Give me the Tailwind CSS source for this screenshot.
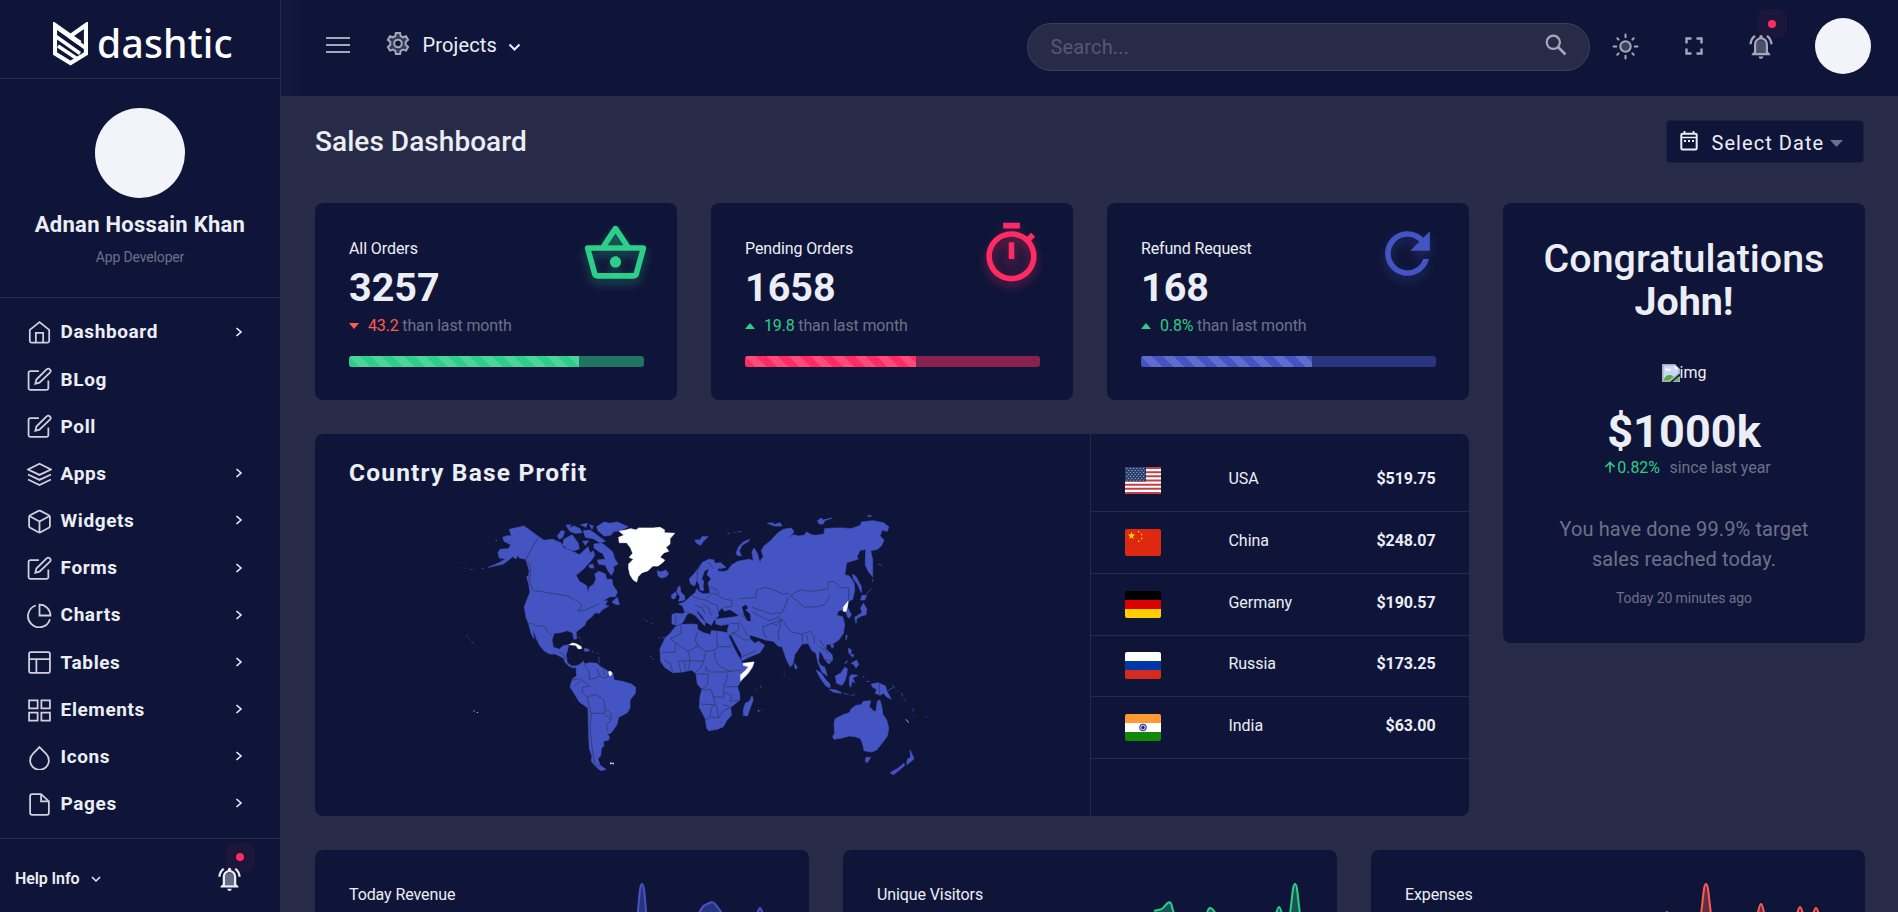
<!DOCTYPE html>
<html lang="en">
<head>
<meta charset="utf-8">
<title>Dashtic - Sales Dashboard</title>
<script src="https://cdn.jsdelivr.net/npm/@tailwindcss/browser@4"></script>
</head>
<body class="h-[912px] overflow-hidden bg-[#272b48] text-[#eceef6] text-base font-['Roboto',sans-serif]">
<svg class="hidden">
  <symbol id="home" viewBox="0 0 24 24"><path d="M2.700 9.500 12 2l9.300 7.500V20a1.800 1.800 0 0 1-1.800 1.800h-15A1.800 1.800 0 0 1 2.700 20z"/><path d="M8.500 21.800V12.300h7v9.500"/></symbol>
  <symbol id="edit" viewBox="0 0 24 24"><path d="M11.500 4H3.300A1.800 1.800 0 0 0 1.500 5.800v14.400A1.800 1.800 0 0 0 3.300 22h15.400a1.800 1.800 0 0 0 1.800-1.800V13"/><path d="M18.800 2.400a2.200 2.200 0 0 1 3.200 3.100L12 15l-4 1 1-4z"/></symbol>
  <symbol id="layers" viewBox="0 0 24 24"><path d="m12 1.700 11 5.500-11 5.200L1 7.200zM1 12l11 5.200L23 12M1 16.800 12 22.200l11-5.400"/></symbol>
  <symbol id="box" viewBox="0 0 24 24"><path d="M22 16.500v-9a2 2 0 0 0-1-1.500l-8-4.200a2 2 0 0 0-2 0L3 6a2 2 0 0 0-1 1.500v9A2 2 0 0 0 3 18l8 4.300a2 2 0 0 0 2 0l8-4.300a2 2 0 0 0 1-1.500z"/><path d="M2.300 6.700 12 12.010l9.700-5.310M12 22.500V12"/></symbol>
  <symbol id="pie" viewBox="0 0 24 24"><path d="M22 15.500A10.700 10.700 0 1 1 8.500 2.400"/><path d="M22.500 12A10.500 10.500 0 0 0 12 1.500V12z"/></symbol>
  <symbol id="table" viewBox="0 0 24 24"><rect x="2" y="2" width="20" height="20" rx="1.800"/><path d="M2 8.700h20M9 22V8.700"/></symbol>
  <symbol id="grid" viewBox="0 0 24 24"><path d="M2 2.200h8.200v7.800H2zM13.800 2.200H22v7.800h-8.200zM13.800 14H22v7.800h-8.200zM2 14h8.200v7.800H2z"/></symbol>
  <symbol id="drop" viewBox="0 0 24 24"><path d="m12 2 6.400 6.500a9 9 0 1 1-12.800 0z"/></symbol>
  <symbol id="file" viewBox="0 0 24 24"><path d="M13.500 2H5a2 2 0 0 0-2 2v16a2 2 0 0 0 2 2h14a2 2 0 0 0 2-2V9z"/><path d="M13.500 2v7H21"/></symbol>
  <symbol id="right" viewBox="0 0 10 12"><path d="m2.500 2 4.500 4-4.500 4"/></symbol>
  <symbol id="bell" viewBox="0 0 24 24"><path d="M8 18v-7a4 4 0 0 1 8 0v7z" fill="currentColor" opacity=".4"/><path d="M18 17v-6c0-3.070-1.630-5.640-4.500-6.320V4a1.500 1.500 0 0 0-3 0v.680C7.640 5.360 6 7.920 6 11v6l-2 2v1h16v-1zm-2 1H8v-7c0-2.480 1.510-4.500 4-4.500s4 2.020 4 4.500zM12 23a2 2 0 0 0 2-2h-4c0 1.100.9 2 2 2zM7.580 4.080 6.150 2.650C3.750 4.480 2.170 7.300 2.030 10.500h2a8.450 8.450 0 0 1 3.550-6.420zM19.970 10.500h2c-.15-3.200-1.730-6.020-4.120-7.850l-1.420 1.430a8.500 8.500 0 0 1 3.540 6.420z" fill="currentColor"/></symbol>
</svg>
<div class="flex h-full">

<aside class="flex h-[912px] w-[281px] shrink-0 flex-col border-r border-[#272b48] bg-[#0f1538]">
  <div class="flex h-[79px] items-center border-b border-[#272b48] pt-[10px] pl-[53px]">
    <svg class="h-[44px] w-[35px] text-white" viewBox="0 0 35 44" fill="none" stroke="currentColor" stroke-width="4.200"><path d="M2 3v28.500L17.500 41 33 31.500V3L17.500 14z"/><path d="M3 5 32.500 26M3 14.500 27 31.500M5 24l18 12" stroke-width="3.600"/><path d="M17.500 14.500 27 21" stroke-width="5"/></svg>
    <span class="mt-[-4px] ml-[9px] text-[39px] leading-none font-medium tracking-[0.200px] text-white font-['Noto_Sans',sans-serif]">dashtic</span>
  </div>
  <div class="flex h-[219px] flex-col items-center border-b border-[#272b48] pt-[29px]">
    <div class="size-[90px] rounded-full bg-[#f3f4f9]"></div>
    <div class="mt-[12px] text-[22px] leading-[30px] font-bold tracking-[0.280px]">Adnan Hossain Khan</div>
    <div class="mt-[7px] text-[14px] leading-[20px] tracking-[-0.150px] text-[#6c7189]">App Developer</div>
  </div>
  <nav class="flex h-[541px] flex-col border-b border-[#272b48] pt-[11px] text-[19px] font-bold tracking-[0.600px] [&>a]:flex [&>a]:h-[47.200px] [&>a]:items-center [&>a]:pl-[27px] [&>a>svg:first-child]:mr-[8.600px] [&>a>svg:first-child]:size-[25px] [&>a>svg:first-child]:fill-none [&>a>svg:first-child]:stroke-[#cfd1dc] [&>a>svg:first-child]:stroke-[1.700] [&>a>svg+span+svg]:mt-[-2px] [&>a>svg+span+svg]:mr-[36px] [&>a>svg+span+svg]:ml-auto [&>a>svg+span+svg]:h-[12px] [&>a>svg+span+svg]:w-[10px] [&>a>svg+span+svg]:fill-none [&>a>svg+span+svg]:stroke-[#eceef6] [&>a>svg+span+svg]:stroke-[1.600]">
    <a><svg><use href="#home"/></svg><span>Dashboard</span><svg><use href="#right"/></svg></a>
    <a><svg><use href="#edit"/></svg><span>BLog</span></a>
    <a><svg><use href="#edit"/></svg><span>Poll</span></a>
    <a><svg><use href="#layers"/></svg><span>Apps</span><svg><use href="#right"/></svg></a>
    <a><svg><use href="#box"/></svg><span>Widgets</span><svg><use href="#right"/></svg></a>
    <a><svg><use href="#edit"/></svg><span>Forms</span><svg><use href="#right"/></svg></a>
    <a><svg><use href="#pie"/></svg><span>Charts</span><svg><use href="#right"/></svg></a>
    <a><svg><use href="#table"/></svg><span>Tables</span><svg><use href="#right"/></svg></a>
    <a><svg><use href="#grid"/></svg><span>Elements</span><svg><use href="#right"/></svg></a>
    <a><svg><use href="#drop"/></svg><span>Icons</span><svg><use href="#right"/></svg></a>
    <a><svg><use href="#file"/></svg><span>Pages</span><svg><use href="#right"/></svg></a>
  </nav>
  <div class="flex flex-1 items-center pt-[6px] pr-[37.500px] pl-[15px]">
    <span class="text-[16px] font-semibold tracking-[-0.100px]">Help Info</span>
    <svg class="ml-[11px] h-[8px] w-[12px]" viewBox="0 0 12 8" fill="none" stroke="currentColor" stroke-width="1.500"><path d="m2 2 4 4 4-4"/></svg>
    <div class="relative mt-[-1px] ml-auto">
      <svg class="block size-[27px]"><use href="#bell"/></svg>
      <span class="absolute -top-[22px] left-[10px] flex size-[29px] items-center justify-center rounded-[9px] bg-[#ff2b63]/5"><i class="size-[8px] rounded-full bg-[#ff2b63]"></i></span>
    </div>
  </div>
</aside>

<div class="flex min-w-0 flex-1 flex-col">
  <header class="flex h-[96px] shrink-0 items-center bg-[#0f1538] bg-linear-to-r from-[#131840] from-0% to-[#0f1538] to-[2%] pr-[27px] pl-[45px]">
    <svg class="mt-[-7px] h-[20px] w-[24px] text-[#a5a8b8]" viewBox="0 0 24 20" stroke="currentColor" stroke-width="2"><path d="M0 3h24M0 10h24M0 17h24"/></svg>
    <svg class="mt-[-9px] ml-[36px] h-[25px] w-[24px] text-[#a5a8b8]" viewBox="0 0 24 24" fill="none" stroke="currentColor" stroke-width="2"><path d="M9.900 1.500h4.200l.6 3 2.300 1.300 3-1.100 2.100 3.600-2.400 2.100v2.900l2.400 2.100-2.100 3.700-3-1.100-2.300 1.300-.6 3.200H9.900l-.6-3.200L7 18l-3 1.100-2.100-3.700 2.400-2.100v-2.900L1.900 8.300 4 4.700l3 1.100 2.300-1.300z" fill="#a5a8b8" fill-opacity=".25"/><circle cx="12" cy="12" r="3.800" fill="#0f1538"/></svg>
    <span class="mt-[-6px] ml-[12.500px] text-[20px] tracking-[0.150px]">Projects</span>
    <svg class="mt-[-2px] ml-[11px] h-[9px] w-[13px]" viewBox="0 0 13 9" fill="none" stroke="currentColor" stroke-width="2"><path d="m1.500 1.500 5 5 5-5"/></svg>
    <div class="mt-[-2px] ml-auto flex h-[48px] w-[563px] items-center rounded-full border border-[#3a3f5c] bg-[#272b48] pr-[22px] pl-[22.500px]">
      <span class="text-[20px] tracking-[0.150px] text-[#555972]">Search...</span>
      <svg class="mt-[-5px] ml-auto size-[22px] text-[#a5a8b8]" viewBox="0 0 22 22" fill="none" stroke="currentColor" stroke-width="2.200"><circle cx="8.300" cy="8.300" r="6.600"/><path d="m13 13 7.500 7.500" stroke-width="2.600"/></svg>
    </div>
    <svg class="mt-[-3px] ml-[22px] size-[27px] text-[#a5a8b8]" viewBox="0 0 27 27" fill="none" stroke="currentColor" stroke-width="2"><circle cx="13.500" cy="13.500" r="5.200" fill="#a5a8b8" fill-opacity=".3"/><path stroke-linecap="round" d="M13.500 1.500v2.800M13.500 22.700v2.800M1.500 13.500h2.800M22.700 13.500h2.800M5.300 5.300l1.300 1.300M20.400 20.400l1.300 1.300M21.700 5.300l-1.300 1.300M6.600 20.400l-1.300 1.300"/></svg>
    <svg class="mt-[-5px] ml-[46px] size-[18px] text-[#a5a8b8]" viewBox="0 0 18 18" fill="none" stroke="currentColor" stroke-width="2.400"><path d="M1.500 6.500V1.500h5M11.500 1.500h5v5M16.500 11.500v5h-5M6.500 16.500h-5v-5"/></svg>
    <div class="relative mt-[-4px] ml-[44px]">
      <svg class="block size-[28px] text-[#a5a8b8]"><use href="#bell"/></svg>
      <span class="absolute -top-[23px] left-[10.500px] flex size-[29px] items-center justify-center rounded-[9px] bg-[#ff2b63]/5"><i class="size-[8px] rounded-full bg-[#ff2b63]"></i></span>
    </div>
    <div class="mt-[-4px] ml-[40px] size-[56px] rounded-full bg-[#f3f4f9]"></div>
  </header>

  <main class="flex flex-1 flex-col px-[34px] pr-[33px]">
    <div class="flex h-[107px] items-start justify-between pt-[24px]">
      <h1 class="mt-[2px] text-[28px] leading-[40px] font-medium tracking-[0.050px]">Sales Dashboard</h1>
      <div class="mr-[1px] flex h-[43px] w-[198px] items-center rounded-[4px] border border-[#1b2045] bg-[#0f1538] pl-[13px]">
        <svg class="mt-[-1px] h-[20px] w-[18px]" viewBox="0 0 18 20" fill="none" stroke="currentColor" stroke-width="2"><path d="M4.500 0v3M13.500 0v3" stroke-width="1.800"/><rect x="1.300" y="2.700" width="15.400" height="15.800" rx="1.200"/><path d="M1 6.500h16" stroke-width="1.500"/><path d="M4 10h2m2 0h2m2 0h2"/></svg>
        <span class="mt-[3px] ml-[13.500px] text-[20px] tracking-[1.050px]">Select Date</span>
        <svg class="mt-[3px] ml-[6px] h-[7px] w-[13px] text-[#6c7189]" viewBox="0 0 13 7" fill="currentColor"><path d="M0 0h13L6.500 7z"/></svg>
      </div>
    </div>

    <div class="flex gap-[34px]">
      <div class="flex w-[1154px] flex-col gap-[33.500px]">
        <div class="grid grid-cols-3 gap-[34px]">
          <section class="relative h-[197px] rounded-[8px] bg-[#0f1538] pt-[34px] pr-[33px] pl-[34px]">
            <div class="text-[16px] leading-[24px] tracking-[-0.080px]">All Orders</div>
            <div class="text-[39.500px] leading-[53px] font-bold">3257</div>
            <div class="flex items-center text-[16px] leading-[24px] tracking-[-0.160px] text-[#6c7189]"><svg class="mr-[9px] h-[6px] w-[10px]" viewBox="0 0 10 6"><path d="M0 0h10L5 6z" fill="#ff5b51"/></svg><span><span class="text-[#ff5b51]">43.2</span> than last month</span></div>
            <div class="mt-[17.500px] h-[11px] overflow-hidden rounded-[3px] bg-[#207561]"><div class="h-full bg-[#2dce89] bg-[linear-gradient(45deg,rgba(255,255,255,.15)_25%,transparent_25%,transparent_50%,rgba(255,255,255,.15)_50%,rgba(255,255,255,.15)_75%,transparent_75%)] bg-[length:22px_22px]" style="width:78%"></div></div>
            <svg class="absolute top-[17px] right-[28px] size-[67px] drop-shadow-[0_5px_5px_rgba(45,206,137,.35)]" viewBox="0 0 24 24" fill="#2dce89"><path d="M9 9l3-4.600L15 9z" opacity=".15"/><path d="M22 9h-4.790l-4.380-6.560c-.19-.28-.51-.42-.83-.42s-.64.140-.83.430L6.790 9H2c-.55 0-1 .45-1 1 0 .09.010.18.040.270l2.540 9.270c.23.840 1 1.460 1.920 1.460h13c.92 0 1.690-.62 1.930-1.460l2.540-9.270L23 10c0-.55-.45-1-1-1zM12 4.800 14.800 9H9.200zM18.500 19l-12.990.010L3.310 11H20.700zM12 13c-1.100 0-2 .9-2 2s.9 2 2 2 2-.9 2-2-.9-2-2-2z"/></svg>
          </section>
          <section class="relative h-[197px] rounded-[8px] bg-[#0f1538] pt-[34px] pr-[33px] pl-[34px]">
            <div class="text-[16px] leading-[24px] tracking-[-0.100px]">Pending Orders</div>
            <div class="text-[39.500px] leading-[53px] font-bold">1658</div>
            <div class="flex items-center text-[16px] leading-[24px] tracking-[-0.160px] text-[#6c7189]"><svg class="mr-[9px] h-[6px] w-[10px]" viewBox="0 0 10 6"><path d="M0 6h10L5 0z" fill="#2dce89"/></svg><span><span class="text-[#2dce89]">19.8</span> than last month</span></div>
            <div class="mt-[17.500px] h-[11px] overflow-hidden rounded-[3px] bg-[#87224e]"><div class="h-full bg-[#ff2b63] bg-[linear-gradient(45deg,rgba(255,255,255,.15)_25%,transparent_25%,transparent_50%,rgba(255,255,255,.15)_50%,rgba(255,255,255,.15)_75%,transparent_75%)] bg-[length:22px_22px]" style="width:58%"></div></div>
            <svg class="absolute top-[17px] right-[28px] size-[67px] drop-shadow-[0_5px_5px_rgba(255,43,99,.35)]" viewBox="0 0 24 24" fill="#ff2b63"><circle cx="12" cy="13.500" r="8" opacity=".07"/><path d="M15 1H9v2h6V1zm-4 13h2V8h-2v6zm8.030-6.610 1.420-1.420c-.43-.51-.9-.99-1.410-1.410l-1.420 1.420A8.962 8.962 0 0 0 12 4c-4.970 0-9 4.030-9 9s4.020 9 9 9a8.994 8.994 0 0 0 7.030-14.610zM12 20c-3.870 0-7-3.130-7-7s3.130-7 7-7 7 3.130 7 7-3.130 7-7 7z"/></svg>
          </section>
          <section class="relative h-[197px] rounded-[8px] bg-[#0f1538] pt-[34px] pr-[33px] pl-[34px]">
            <div class="text-[16px] leading-[24px] tracking-[-0.160px]">Refund Request</div>
            <div class="text-[39.500px] leading-[53px] font-bold">168</div>
            <div class="flex items-center text-[16px] leading-[24px] tracking-[-0.160px] text-[#6c7189]"><svg class="mr-[9px] h-[6px] w-[10px]" viewBox="0 0 10 6"><path d="M0 6h10L5 0z" fill="#2dce89"/></svg><span><span class="text-[#2dce89]">0.8%</span> than last month</span></div>
            <div class="mt-[17.500px] h-[11px] overflow-hidden rounded-[3px] bg-[#29357e]"><div class="h-full bg-[#4454c3] bg-[linear-gradient(45deg,rgba(255,255,255,.15)_25%,transparent_25%,transparent_50%,rgba(255,255,255,.15)_50%,rgba(255,255,255,.15)_75%,transparent_75%)] bg-[length:22px_22px]" style="width:58%"></div></div>
            <svg class="absolute top-[17px] right-[28px] size-[67px] drop-shadow-[0_5px_5px_rgba(68,84,195,.35)]" viewBox="0 0 24 24" fill="#4454c3"><path d="M17.650 6.350A7.958 7.958 0 0 0 12 4c-4.420 0-7.990 3.580-7.990 8s3.570 8 7.990 8c3.730 0 6.840-2.550 7.730-6h-2.080A5.990 5.990 0 0 1 12 18c-3.310 0-6-2.690-6-6s2.690-6 6-6c1.660 0 3.140.69 4.220 1.780L13 11h7V4l-2.350 2.350z"/></svg>
          </section>
        </div>

        <section class="flex h-[382px] overflow-hidden rounded-[8px] bg-[#0f1538]">
          <div class="w-[775px] px-[34px] pt-[23px]">
            <h2 class="text-[24.500px] leading-[32px] font-bold tracking-[1.200px]">Country Base Profit</h2>
            <svg class="mt-[11px] ml-[101px] h-[280px] w-[480px]" viewBox="0 0 1440 840" fill="#4454c3">
              <g stroke="#4454c3" stroke-width="2" stroke-linejoin="round">
                <path d="M178 88 222 78 266 110 228 178 208 174 204 164 198 176 188 170 176 180 160 192 115 202 150 187 167 176 148 174 144 158 150 148 176 146 182 134 162 124 158 112 172 107 184 108z"/>
                <path d="M266 110 282 121 308 118 332 128 342 145 372 156 388 164 404 150 414 140 420 160 430 152 434 166 422 184 412 194 400 208 378 226 388 244 410 257 414 281 418 262 432 252 438 236 434 222 446 214 466 222 470 238 486 238 488 254 502 276 496 290 480 290 458 303 472 302 466 316 476 318 456 330 448 340 436 338 424 352 410 362 404 376 386 390 378 396 380 416 372 418 368 398 352 392 330 398 312 400 306 420 310 442 328 448 338 438 356 434 352 452 348 464 352 488 364 498 378 498 374 504 360 500 346 488 340 474 316 462 300 462 284 454 270 438 260 418 248 384 252 416 244 402 236 372 228 352 223 320 240 276 238 262 234 240 238 212 228 180z"/>
                <path d="M342 118 366 104 384 128 388 146 374 152 350 146 338 134zM322 108 334 92 344 94 338 112 328 118zM348 76 362 74 358 84 372 78 390 86 396 98 376 100 360 94zM392 74 412 70 408 82zM400 92 420 90 440 104 466 124 450 128 430 116 406 112zM418 74 430 78 426 88zM440 80 462 66 480 70 502 66 534 80 512 92 492 94 482 106 462 108 444 92zM398 124 416 122 406 136zM432 132 456 130 472 142 488 156 494 176 504 192 490 200 492 212 484 226 474 212 466 196 446 192 442 180 466 178 458 160 448 156 432 144zM416 196 428 192 432 204 420 204zM486 306 502 292 508 314 494 312zM236 182 242 192 244 218 236 206zM230 230 234 228 234 244zM238 260 250 268 248 274z"/>
                <path d="M136 118 142 124M34 188l3 2M46 203l4 2M60 208l5 1M70 209l4 0M95 206l8-2M48 406l4 3M56 413l4 3M64 424l6 6M386 410l4 6M392 424l4 4M402 446 412 446 420 452 404 454zM426 454l5 2M440 460l5 1M446 470l2 20M580 360l4 0M590 362l4 4M603 369l3 2M626 412l4 1M638 414l4 0M600 468l6 2M606 478l4-2"/>
                <path d="M400 484 404 492 420 488 440 490 452 500 472 512 488 518 492 540 516 544 544 552 557 562 556 580 540 600 540 624 532 638 506 652 500 676 484 698 470 704 478 708 476 720 460 724 462 738 454 744 452 768 444 776 450 796 468 808 452 812 434 796 424 784 426 768 418 746 416 700 414 624 388 606 370 576 360 560 368 536 380 528 378 498 388 494z"/>
                <path d="M622 212 632 216 648 210 656 222 648 230 634 234 624 228zM666 296 664 286 676 276 680 284 674 296zM684 262 690 258 692 276 704 288 704 300 686 304 690 290 680 276z"/>
              </g>
              <g fill="#fff" stroke="#fff" stroke-width="2"><path d="M508 94 528 90 542 86 558 90 566 84 590 84 610 84 630 82 644 90 642 98 674 100 660 116 660 132 648 142 656 154 642 158 630 172 644 180 640 186 624 198 608 198 594 212 576 218 564 230 560 246 550 240 540 224 536 206 536 192 550 178 538 172 548 160 542 144 530 128 508 128 506 112 522 106z"/><path d="M358 434 368 429 380 432 394 440 394 446 384 446 378 436zM474 516 482 514 486 522 480 528zM70 632l4 2M80 637l4 1M480 788l5 1-3 4M487 789l5 1-4 3"/></g>
              <g transform="translate(600)" stroke="#4454c3" stroke-width="2" stroke-linejoin="round">
                <path d="M66 344 76 340 100 342 104 334 98 318 86 312 104 306 114 296 126 286 136 278 140 266 148 276 160 282 180 280 178 264 174 248 164 246 160 272 150 270 148 254 140 240 134 258 122 252 118 236 132 222 144 206 156 188 176 178 192 180 194 190 212 188 228 202 208 206 212 216 232 212 246 194 264 184 284 180 298 178 310 182 306 156 312 144 322 160 330 190 334 176 340 172 334 152 342 138 362 122 382 100 400 88 424 84 432 96 414 116 430 104 446 108 462 106 470 96 484 104 498 106 522 102 524 86 556 84 580 84 604 86 632 76 634 66 668 62 700 68 716 80 712 94 696 90 690 108 702 120 694 138 682 148 662 152 668 180 668 230 656 216 646 196 646 168 648 146 638 152 640 170 622 178 590 188 584 224 598 228 612 248 614 270 608 298 596 304 592 322 604 344 596 354 586 334 576 330 566 332 560 346 578 350 584 374 580 400 566 420 544 434 530 432 528 446 546 464 548 480 536 492 524 478 516 462 508 452 506 484 512 496 524 502 532 528 516 516 504 488 498 460 486 452 474 430 456 432 434 464 428 494 420 500 410 480 396 440 384 438 370 424 346 420 336 416 316 410 298 404 300 416 314 430 326 424 344 436 330 458 300 470 276 482 270 464 252 436 236 408 232 390 238 372 212 376 198 372 196 358 226 354 258 350 268 346 236 330 228 336 210 334 204 350 192 360 184 376 168 366 158 350 146 336 136 330 152 352 166 366 164 378 150 362 136 346 120 338 110 344 98 368 82 376 66 372z"/>
                <path d="M76 380 92 374 124 372 142 374 142 388 160 398 182 404 184 392 206 394 232 398 236 412 250 440 266 468 276 488 290 492 312 486 308 502 296 520 274 542 262 560 268 578 270 600 242 622 244 646 230 662 220 680 202 688 176 692 170 684 166 656 148 622 150 590 156 568 142 552 138 520 124 510 98 516 68 518 44 502 32 484 30 446 46 414 62 398z"/>
                <path d="M306 588 310 598 302 620 292 648 280 646 280 630 286 610 298 604zM434 490 442 502 438 508 434 502zM258 160 266 140 280 126 298 118 296 124 276 136 268 152 274 168 262 166zM134 120 150 120 156 110 174 110 160 124 152 136 140 130zM352 70 368 68 372 74 390 68 396 78 374 78zM502 62 514 54 520 60 546 54 524 62 520 72 508 72zM652 48l10-2 2 4zM232 100l8 0M250 98l6-1M262 96l14-2"/>
                <path d="M608 222 618 230 634 260 634 278 622 252 610 236zM636 286 650 286 644 300 632 300zM640 310 650 326 648 344 634 348 620 356 618 370 614 352 636 338 632 324zM650 282 664 266M668 236 668 246M684 192 696 196M588 406 592 406 588 420zM590 334 600 340 600 352 592 350zM544 434 552 436 548 444 542 440zM596 444 604 450 602 462 612 464 608 472 596 458zM604 490 620 480 626 494 618 504 612 494zM584 490 592 482 590 488z"/>
                <path d="M498 510 512 518 528 540 540 552 540 564 528 558 512 536zM538 568 558 570 574 578 572 580 550 576zM556 528 572 520 584 502 592 506 590 524 584 544 576 556 560 550zM598 532 604 524 624 526 608 534 614 548 606 544 602 562 598 552zM580 580 596 584M602 588 616 582M648 544l12 0M640 528l2 6M664 552 676 550 684 548 706 558 712 576 724 598 712 592 700 580 690 586 676 580 680 568 668 562zM714 572 730 562M726 556 736 564M742 572l4 4M754 578 758 590M762 598l6 6M788 626l2 8M793 648l2 3M828 648l2 4M318 570l4-2M332 562l2-5M330 558l3 4M334 630l4 0M402 514l0 4M402 524l2 4M4 370l3 2M40 412l6 2"/>
                <path d="M556 656 580 644 598 638 604 626 618 616 634 614 640 604 662 602 658 620 672 634 678 634 682 604 690 600 696 624 698 642 710 660 716 684 712 708 696 730 680 750 664 756 642 752 638 732 632 716 616 710 598 708 576 714 552 718 548 710 554 700 552 670zM648 772 662 772 652 788 646 784zM780 750 792 776 784 784 770 794 772 778 782 772zM762 790 764 796 746 812 730 824 720 818 742 806z"/>
              </g>
              <g transform="translate(600)" fill="#0f1538"><path d="M204 206 212 206 206 216zM164 214 176 206 170 224 182 236 176 246 170 250 166 268 160 262 162 244 156 236zM204 338 216 324 222 334 240 330 250 336 258 342 240 346 208 346zM276 320 288 314 294 324 286 330 300 342 302 364 292 362 282 344zM236 404 244 408 274 464 274 476 264 464zM622 170 630 152 640 150 644 172 628 180z"/></g>
              <g transform="translate(600)" fill="#fff" stroke="#fff" stroke-width="2"><path d="M594 304 592 320 588 334 580 334 580 322zM280 490 312 486 306 502 292 522 272 542 272 524 286 512 296 500 280 496zM324 632l4 1M768 658l8 10"/></g>
              <g fill="none" stroke="#303760" stroke-width="2.200">
                <path d="M266 110 226 180 238 192 242 218 238 240 248 270M250 271 354 288 382 304 396 316 384 334 410 328 438 316 448 310M236 370 250 372 258 378 284 378 292 394 306 408M326 456 340 462 346 480M402 492 412 506 418 520 418 538 438 534 450 528 440 506M450 528 460 534 474 530M460 510 464 526M474 510 474 530M368 540 390 536 406 548 418 558 398 562 396 578 412 590 440 584 462 600 466 626 482 640 484 660 470 672 472 694M372 558 390 544M412 590 418 620 424 640 462 640 466 626M424 640 420 680 426 740 434 790 450 800M462 640 482 660"/>
                <path transform="translate(600)" d="M270 296 294 294 318 292 320 270 344 262 372 270 398 282 414 280 424 290 432 278 454 270 482 274 532 268 536 246 552 244 572 262 596 264 596 300M424 290 444 304 464 322 500 320 524 314 540 286M414 292 410 306 402 326 394 340 376 338 364 342 342 334 306 322M308 336 330 350 360 362 386 350 390 362 366 370 338 380 342 402 350 416M366 370 380 376 396 356 406 374 424 396 458 402 480 394 492 410 494 430M396 356 384 402 388 420M456 402 458 428M470 404 474 424M510 420 522 440 534 462M508 440 524 450M268 366 284 390 292 408M240 370 264 370 266 390 242 404M246 396 284 420 296 420M276 470 318 452M272 340 290 360M170 296 184 280 204 284 214 294 246 302 244 320 224 322M156 188 142 214 142 250M176 186 190 206M180 262 200 268 208 280M126 288 150 298 168 300 180 308 202 316 206 336M134 316 156 322 166 342M158 312 176 324 184 346M76 344 78 370M102 334 124 342M200 394 202 440 244 440M142 396 136 420 144 438 168 454 196 450 202 440M92 378 94 400 60 416 76 428 76 456 36 458M76 428 114 454 144 438M114 454 120 482 160 484 168 454M160 484 154 500 138 516M82 484 120 482 116 510M104 488 106 514M88 490 92 516M42 480 60 490 68 516M194 456 196 478 210 500 240 514 274 510M166 500 178 516 232 516 240 514M166 500 168 516M140 522 176 522 172 556 156 568M152 570 182 568 190 590 196 614 150 612M190 590 222 592 220 560 228 544 234 520M222 576 244 586 240 604 268 600M196 614 184 624 180 652 164 660M184 652 206 654 222 630 240 624M206 654 200 616M218 614 240 620M226 560 266 560M546 484 524 478M688 552 688 584M208 664l6 4"/>
              </g>
            </svg>
          </div>
          <div class="flex-1 border-l border-[#272b48] pt-[17px] text-[16px] [&>div]:flex [&>div]:h-[61.700px] [&>div]:items-center [&>div]:border-b [&>div]:border-[#272b48] [&>div]:pr-[33.500px] [&>div]:pb-[3.200px] [&>div]:pl-[34px] [&>div>svg]:mt-[3px] [&>div>svg]:h-[27px] [&>div>svg]:w-[36px] [&>div>svg]:rounded-[2px] [&>div>span]:ml-[67.500px] [&>div>span]:tracking-[-0.050px] [&>div>b]:ml-auto [&>div>b]:font-bold [&>div>b]:tracking-[-0.100px]">
            <div><svg viewBox="0 0 36 27"><path fill="#fff" d="M0 0h36v27H0z"/><path stroke="#bf4048" stroke-width="2.080" d="M0 1h36M0 5.200h36M0 9.300h36M0 13.500h36M0 17.700h36M0 21.800h36M0 26h36"/><path fill="#2b3f6c" d="M0 0h21v14.500H0z"/><path stroke="#9faac6" stroke-width="1" stroke-dasharray="1.100 2.200" d="M1.500 1.500H20M3 3.500h17M1.500 5.500H20M3 7.500h17M1.500 9.500H20M3 11.500h17M1.500 13.200H20"/></svg><span>USA</span><b>$519.75</b></div>
            <div><svg viewBox="0 0 36 27"><path fill="#de2910" d="M0 0h36v27H0z"/><path fill="#ffde00" d="m6.500 2.800.9 2.700h2.800L8 7.200l.9 2.700-2.400-1.700-2.300 1.700L5 7.200 2.800 5.500h2.800zM13 2h1.400v1.400H13zM16 4.800h1.300v1.400H16zM16 8.800h1.300v1.400H16zM13 11.500h1.400v1.400H13z"/></svg><span>China</span><b>$248.07</b></div>
            <div><svg viewBox="0 0 36 27"><path d="M0 0h36v9H0z"/><path fill="#d00" d="M0 9h36v9H0z"/><path fill="#ffce00" d="M0 18h36v9H0z"/></svg><span>Germany</span><b>$190.57</b></div>
            <div><svg viewBox="0 0 36 27"><path fill="#fff" d="M0 0h36v9H0z"/><path fill="#0039a6" d="M0 9h36v9H0z"/><path fill="#d52b1e" d="M0 18h36v9H0z"/></svg><span>Russia</span><b>$173.25</b></div>
            <div><svg viewBox="0 0 36 27"><path fill="#f93" d="M0 0h36v9H0z"/><path fill="#fff" d="M0 9h36v9H0z"/><path fill="#128807" d="M0 18h36v9H0z"/><circle cx="18" cy="13.500" r="3.400" fill="#b4b4e0" stroke="#33339b" stroke-width="1"/><circle cx="18" cy="13.500" r="1.500" fill="#1a1a80"/></svg><span>India</span><b>$63.00</b></div>
          </div>
        </section>
      </div>

      <section class="flex h-[440px] w-[362px] flex-col items-center rounded-[8px] bg-[#0f1538] pt-[34px] text-center">
        <h2 class="text-[39.400px] leading-[43px] font-medium">Congratulations<br><b class="font-bold">John!</b></h2>
        <div class="mt-[35px] flex h-[30px] items-center text-[16px]">
          <svg class="size-[18px]" viewBox="0 0 18 18"><path d="M0 0h13l5 5v13H0z" fill="#a9adb3"/><path d="M1.500 1.500h11v4h4V9l-9 7.500h-6z" fill="#c6d9fa"/><path d="M3 6.500a2 2 0 0 1 3.500-1.500A1.500 1.500 0 0 1 9 6.500z" fill="#fff"/><path d="M1.500 16.500c1-5 6-7 10-4L7 16.500z" fill="#55ab3b"/><path d="m8 18 10-8.500v2.500l-7.500 6z" fill="#0f1538"/><path d="M12.500 1v4.500H17z" fill="#fff"/><path d="M11.500 16.500 16.500 12.500v4z" fill="#55ab3b"/></svg><span>img</span>
        </div>
        <div class="mt-[18px] text-[45px] leading-[52px] font-bold tracking-[0.100px]">$1000k</div>
        <div class="mt-[-2px] ml-[7px] flex items-center text-[16px] leading-[24px] text-[#6c7189]"><svg class="mt-[-2px] size-[12px]" viewBox="0 0 13 13" fill="none" stroke="#2dce89" stroke-width="1.700"><path d="M6.500 12.500V1.800M1.500 6.500l5-5 5 5"/></svg><span class="ml-[1px] tracking-[-0.050px] text-[#2dce89]">0.82%</span><span class="ml-[9.500px] tracking-[-0.050px]">since last year</span></div>
        <p class="mt-[34px] text-[20px] leading-[30px] tracking-[0.120px] text-[#6c7189]">You have done 99.9% target<br>sales reached today.</p>
        <p class="mt-[14px] text-[14px] leading-[20px] tracking-[-0.080px] text-[#6c7189]">Today 20 minutes ago</p>
      </section>
    </div>

    <div class="mt-[34.500px] grid h-[62px] grid-cols-3 gap-[34px] overflow-hidden">
      <section class="flex h-[120px] justify-between rounded-[8px] bg-[#0f1538] pt-[32px] pr-[34px] pl-[34px]">
        <span class="mt-[1px] leading-[24px] tracking-[-0.100px]">Today Revenue</span>
        <svg class="h-[60px] w-[150px]" viewBox="0 0 150 60" fill="#4454c3" fill-opacity=".5" stroke="#4454c3" stroke-width="2"><path d="M10 60 C14 26 14 2 17 2 S20 26 24 60M72 34c3-4 5-10 8-11 5-2 7-5 11 0l8 11v20H70zM130 40c2-6 3-14 5-14s3 8 5 14"/></svg>
      </section>
      <section class="flex h-[120px] justify-between rounded-[8px] bg-[#0f1538] pt-[32px] pr-[34px] pl-[34px]">
        <span class="mt-[1px] leading-[24px] tracking-[-0.100px]">Unique Visitors</span>
        <svg class="mr-[-3px] h-[60px] w-[155px]" viewBox="0 0 155 60" fill="#2dce89" fill-opacity=".35" stroke="#2dce89" stroke-width="2"><path d="M3 29c4-2 7 0 10-4s7-8 8 0l3 10M54 40c2-6 2-14 5-14s5 5 8 9M123 40c2-6 3-15 5-15s3 8 5 15M137 44C141 26 141 2 144 2s3 24 7 42"/></svg>
      </section>
      <section class="flex h-[120px] justify-between rounded-[8px] bg-[#0f1538] pt-[32px] pr-[34px] pl-[34px]">
        <span class="mt-[1px] leading-[24px] tracking-[-0.100px]">Expenses</span>
        <svg class="h-[60px] w-[190px]" viewBox="0 0 190 60" fill="#ff5b51" fill-opacity=".35" stroke="#ff5b51" stroke-width="2"><path d="M22 40c2-6 3-10 4-10s2 4 4 10M58 44C62 26 62 2 65 2s3 24 7 42M115 40c2-8 3-18 5-18s3 10 5 18M154 40c2-6 3-15 5-15s3 8 5 15M170 40c2-6 3-14 5-14s3 8 5 14"/></svg>
      </section>
    </div>
  </main>
</div>
</div>
</body>
</html>
